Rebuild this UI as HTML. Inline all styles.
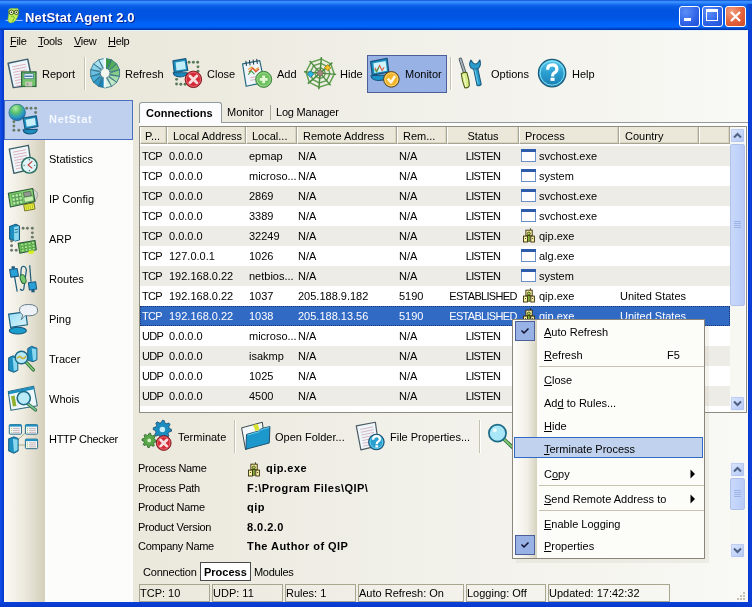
<!DOCTYPE html><html><head><meta charset="utf-8"><style>
*{margin:0;padding:0;box-sizing:border-box}
html,body{width:752px;height:607px;overflow:hidden;background:#ece9d8}
body{position:relative;font-family:"Liberation Sans",sans-serif;font-size:11px;color:#000}
.a{position:absolute}
.t{position:absolute;white-space:nowrap;line-height:13px}
.cap{letter-spacing:-0.7px}
svg{position:absolute;overflow:visible}
body{will-change:transform}
</style></head><body>
<div class="a" style="left:4px;top:30px;width:744px;height:573px;background:linear-gradient(to right,#e8e6d8 0%,#eceade 25%,#f0efe8 50%,#f9f9f5 100%)"></div>
<div class="a" style="left:0;top:0;width:752px;height:30px;
background:linear-gradient(to bottom,#0a3fc0 0px,#2f86ff 1px,#3d95ff 2px,#1f73f5 4px,#0a5fe6 6px,#0054e0 10px,#0055e3 18px,#0060f4 22px,#0066fb 27px,#0050d8 28px,#0038b0 29.5px,#0038b0 30px)"></div>
<div class="t" style="left:25px;top:10px;font-size:13px;font-weight:bold;letter-spacing:0.15px;color:#fff;text-shadow:1px 1px 0 #0a1e8a;line-height:16px">NetStat Agent 2.0</div>
<div class="a" style="left:679px;top:6px;width:21px;height:21px;border:1px solid #fff;border-radius:3px;background:radial-gradient(circle at 30% 25%,#5d8ff8 0%,#2f62e6 60%,#1e4fd6 100%)"></div>
<div class="a" style="left:702px;top:6px;width:21px;height:21px;border:1px solid #fff;border-radius:3px;background:radial-gradient(circle at 30% 25%,#5d8ff8 0%,#2f62e6 60%,#1e4fd6 100%)"></div>
<div class="a" style="left:725px;top:6px;width:21px;height:21px;border:1px solid #fff;border-radius:3px;background:radial-gradient(circle at 30% 25%,#f0a080 0%,#e2623c 55%,#c94a28 100%)"></div>
<div class="a" style="left:684px;top:18px;width:7px;height:3px;background:#fff"></div>
<div class="a" style="left:747px;top:4px;width:5px;height:26px;background:linear-gradient(to right,#0550e0,#0842cc)"></div>
<div class="a" style="left:706px;top:9px;width:12px;height:12px;border:1px solid #fff;border-top:3px solid #fff"></div>
<svg style="left:725px;top:6px" width="21" height="21" viewBox="0 0 21 21"><path d="M6,6 L15,15 M15,6 L6,15" stroke="#fff" stroke-width="2.2"/></svg>
<div class="a" style="left:0px;top:30px;width:4px;height:577px;background:linear-gradient(to right,#1250e8,#0a42dc 2px,#0836c8 4px)"></div>
<div class="a" style="left:748px;top:30px;width:4px;height:577px;background:linear-gradient(to right,#0836c8,#0a42dc 2px,#0a3ad0 4px)"></div>
<div class="a" style="left:0px;top:602px;width:752px;height:5px;background:linear-gradient(to bottom,#0a40d8 0,#0a3ed4 2px,#0836c8 5px)"></div>
<div class="a" style="left:4px;top:30px;width:744px;height:1px;background:#e4f0fc"></div>
<div class="t" style="left:10px;top:35px;letter-spacing:-0.3px"><u>F</u>ile</div>
<div class="t" style="left:38px;top:35px;letter-spacing:-0.3px"><u>T</u>ools</div>
<div class="t" style="left:74px;top:35px;letter-spacing:-0.3px"><u>V</u>iew</div>
<div class="t" style="left:108px;top:35px;letter-spacing:-0.3px"><u>H</u>elp</div>
<div class="a" style="left:367px;top:55px;width:80px;height:38px;background:#98b2e6;border:1px solid #4b5f99"></div>
<div class="t" style="left:42px;top:68px;">Report</div>
<div class="t" style="left:125px;top:68px;">Refresh</div>
<div class="t" style="left:207px;top:68px;">Close</div>
<div class="t" style="left:277px;top:68px;">Add</div>
<div class="t" style="left:340px;top:68px;">Hide</div>
<div class="t" style="left:405px;top:68px;">Monitor</div>
<div class="t" style="left:491px;top:68px;">Options</div>
<div class="t" style="left:572px;top:68px;">Help</div>
<div class="a" style="left:84px;top:57px;width:2px;height:33px;border-left:1px solid #c5c2b2;border-right:1px solid #fff"></div>
<div class="a" style="left:450px;top:57px;width:2px;height:33px;border-left:1px solid #c5c2b2;border-right:1px solid #fff"></div>
<svg style="left:4px;top:54px" width="40" height="40" viewBox="0 0 607 607">
<polygon points="62,140 360,78 440,470 140,510" fill="#eef6fb" stroke="#3d5c6e" stroke-width="22" stroke-linejoin="round"/>
<line x1="125" y1="195" x2="330" y2="155" stroke="#d8a0a8" stroke-width="12"/><line x1="133" y1="237" x2="338" y2="197" stroke="#d8a0a8" stroke-width="12"/><line x1="141" y1="279" x2="346" y2="239" stroke="#d8a0a8" stroke-width="12"/><line x1="149" y1="321" x2="354" y2="281" stroke="#d8a0a8" stroke-width="12"/><line x1="157" y1="363" x2="362" y2="323" stroke="#d8a0a8" stroke-width="12"/><line x1="165" y1="405" x2="370" y2="365" stroke="#d8a0a8" stroke-width="12"/><line x1="173" y1="447" x2="378" y2="407" stroke="#d8a0a8" stroke-width="12"/><line x1="181" y1="489" x2="386" y2="449" stroke="#d8a0a8" stroke-width="12"/>
<rect x="268" y="272" width="217" height="220" fill="#74c46c" stroke="#2e6a3e" stroke-width="20"/>
<rect x="305" y="300" width="140" height="75" fill="#e8f4fb" stroke="#3a6a8a" stroke-width="10"/>
<line x1="315" y1="338" x2="435" y2="338" stroke="#4a7aaa" stroke-width="22"/>
<rect x="322" y="420" width="106" height="72" fill="#c8ccb8"/>
<rect x="345" y="438" width="25" height="40" fill="#9aa090"/>
</svg>
<svg style="left:86px;top:54px" width="40" height="40" viewBox="0 0 607 607"><path d="M273,222 L192,88 L291,65 L290,220 Z" fill="#c8eef8" stroke="#2a6a80" stroke-width="12" stroke-linejoin="round"/><path d="M245,236 L114,150 L193,87 L260,227 Z" fill="#a8e0f2" stroke="#2a6a80" stroke-width="12" stroke-linejoin="round"/><path d="M226,261 L71,240 L114,149 L235,246 Z" fill="#88d2ec" stroke="#2a6a80" stroke-width="12" stroke-linejoin="round"/><path d="M220,291 L71,341 L71,239 L222,274 Z" fill="#68c0e4" stroke="#2a6a80" stroke-width="12" stroke-linejoin="round"/><path d="M227,321 L114,431 L71,340 L222,305 Z" fill="#4ab0da" stroke="#2a6a80" stroke-width="12" stroke-linejoin="round"/><path d="M247,345 L193,493 L114,430 L235,334 Z" fill="#3098c8" stroke="#2a6a80" stroke-width="12" stroke-linejoin="round"/><path d="M276,359 L291,515 L192,492 L259,353 Z" fill="#1a84b8" stroke="#2a6a80" stroke-width="12" stroke-linejoin="round"/><path d="M304,221 L289,65 L388,88 L321,227 Z" fill="#3a9a44" stroke="#2a6a80" stroke-width="12" stroke-linejoin="round"/><path d="M333,235 L387,87 L466,150 L345,246 Z" fill="#52ac58" stroke="#2a6a80" stroke-width="12" stroke-linejoin="round"/><path d="M353,259 L466,149 L509,240 L358,275 Z" fill="#6cbc70" stroke="#2a6a80" stroke-width="12" stroke-linejoin="round"/><path d="M360,289 L509,239 L509,341 L358,306 Z" fill="#88cc8a" stroke="#2a6a80" stroke-width="12" stroke-linejoin="round"/><path d="M354,319 L509,340 L466,431 L345,334 Z" fill="#a8dcaa" stroke="#2a6a80" stroke-width="12" stroke-linejoin="round"/><path d="M335,344 L466,430 L387,493 L320,353 Z" fill="#c4e8c6" stroke="#2a6a80" stroke-width="12" stroke-linejoin="round"/><path d="M307,358 L388,492 L289,515 L290,360 Z" fill="#dcf2de" stroke="#2a6a80" stroke-width="12" stroke-linejoin="round"/><rect x="268" y="55" width="36" height="175" fill="#eef8fb"/><rect x="268" y="350" width="36" height="160" fill="#eef8fb"/><circle cx="290" cy="290" r="62" fill="#f4f6f0"/></svg>
<svg style="left:168px;top:54px" width="40" height="40" viewBox="0 0 607 607"><circle cx="320" cy="125" r="22" fill="#5a7a5a"/><circle cx="385" cy="125" r="22" fill="#5a7a5a"/><circle cx="450" cy="125" r="22" fill="#5a7a5a"/><circle cx="455" cy="195" r="22" fill="#5a7a5a"/><circle cx="455" cy="260" r="22" fill="#5a7a5a"/><circle cx="130" cy="385" r="22" fill="#5a7a5a"/><circle cx="130" cy="455" r="22" fill="#5a7a5a"/><circle cx="195" cy="460" r="22" fill="#5a7a5a"/><circle cx="260" cy="460" r="22" fill="#5a7a5a"/><path d="M80,285 Q85,345 180,348 Q285,345 292,285 Z" fill="#1b8bc0" stroke="#16557a" stroke-width="16"/><polygon points="75,105 270,70 300,250 95,280" fill="#1d8fc0" stroke="#1a5c80" stroke-width="18" stroke-linejoin="round"/><polygon points="115,130 252,105 272,228 128,252" fill="#c0eefa"/><circle cx="385" cy="385" r="125" fill="#d42a36" stroke="#7a1418" stroke-width="14"/><circle cx="385" cy="385" r="107" fill="none" stroke="#f0a0a8" stroke-width="8"/><path d="M332.5,332.5 L437.5,437.5 M437.5,332.5 L332.5,437.5" stroke="#f8dede" stroke-width="42" stroke-linecap="round"/></svg>
<svg style="left:236px;top:54px" width="40" height="40" viewBox="0 0 607 607"><polygon points="100,150 360,100 430,430 155,490" fill="#eef6fb" stroke="#2a6a80" stroke-width="18" stroke-linejoin="round"/><line x1="150" y1="110" x2="158" y2="175" stroke="#1a3a50" stroke-width="16" stroke-linecap="round"/><line x1="205" y1="100" x2="213" y2="165" stroke="#1a3a50" stroke-width="16" stroke-linecap="round"/><line x1="260" y1="90" x2="268" y2="155" stroke="#1a3a50" stroke-width="16" stroke-linecap="round"/><line x1="315" y1="80" x2="323" y2="145" stroke="#1a3a50" stroke-width="16" stroke-linecap="round"/><polyline points="185,235 240,200 290,245 345,205" fill="none" stroke="#f0a840" stroke-width="20"/><polyline points="195,275 255,215 300,270 350,225" fill="none" stroke="#e04a28" stroke-width="18"/><polyline points="185,315 230,255 280,305" fill="none" stroke="#40a040" stroke-width="18"/><line x1="215" y1="360" x2="300" y2="345" stroke="#d8a0a8" stroke-width="12"/><line x1="220" y1="400" x2="300" y2="385" stroke="#d8a0a8" stroke-width="12"/><circle cx="420" cy="385" r="122" fill="#6cc060" stroke="#3a7a3a" stroke-width="14"/><circle cx="420" cy="385" r="100" fill="none" stroke="#c8f0b0" stroke-width="8"/><path d="M420,325 L420,445 M360,385 L480,385" stroke="#e4f8d4" stroke-width="44"/></svg>
<svg style="left:301px;top:54px" width="40" height="40" viewBox="0 0 607 607"><g transform="rotate(-18 290 290)"><polygon points="364,321 321,364 259,364 216,321 216,259 259,216 321,216 364,259" fill="none" stroke="#62a050" stroke-width="22"/><polygon points="429,347 347,429 233,429 151,347 151,233 233,151 347,151 429,233" fill="none" stroke="#62a050" stroke-width="22"/><polygon points="489,372 372,489 208,489 91,372 91,208 208,91 372,91 489,208" fill="none" stroke="#62a050" stroke-width="22"/><line x1="290" y1="290" x2="516" y2="384" stroke="#4a8a3e" stroke-width="22"/><line x1="290" y1="290" x2="384" y2="516" stroke="#4a8a3e" stroke-width="22"/><line x1="290" y1="290" x2="196" y2="516" stroke="#4a8a3e" stroke-width="22"/><line x1="290" y1="290" x2="64" y2="384" stroke="#4a8a3e" stroke-width="22"/><line x1="290" y1="290" x2="64" y2="196" stroke="#4a8a3e" stroke-width="22"/><line x1="290" y1="290" x2="196" y2="64" stroke="#4a8a3e" stroke-width="22"/><line x1="290" y1="290" x2="384" y2="64" stroke="#4a8a3e" stroke-width="22"/><line x1="290" y1="290" x2="516" y2="196" stroke="#4a8a3e" stroke-width="22"/></g><polygon points="290,235 345,290 290,345 235,290" fill="#a08878" stroke="#5a5040" stroke-width="10"/><polygon points="145,255 195,305 145,355 95,305" fill="#28b8e0" stroke="#1a5a80" stroke-width="10"/><polygon points="405,160 455,210 405,255 355,210" fill="#f0c020" stroke="#806010" stroke-width="10"/></svg>
<svg style="left:366px;top:54px" width="40" height="40" viewBox="0 0 607 607"><path d="M75,330 Q85,400 190,402 Q320,398 330,320 Z" fill="#1a94c8" stroke="#16557a" stroke-width="16"/><polygon points="70,115 320,65 345,275 95,320" fill="#1a8fc0" stroke="#174f78" stroke-width="18" stroke-linejoin="round"/><polygon points="112,140 298,105 318,255 128,290" fill="#d0f4fb"/><polyline points="135,210 165,260 205,175 245,250 275,200" fill="none" stroke="#e05040" stroke-width="16"/><polyline points="130,235 160,270 195,200" fill="none" stroke="#40a040" stroke-width="16"/><circle cx="385" cy="385" r="118" fill="#f2b428" stroke="#403420" stroke-width="14"/><circle cx="385" cy="385" r="98" fill="none" stroke="#fbe8a0" stroke-width="10"/><polyline points="330,375 380,430 440,335" fill="none" stroke="#fff8e0" stroke-width="40" stroke-linejoin="round"/></svg>
<svg style="left:453px;top:54px" width="40" height="40" viewBox="0 0 607 607"><line x1="112" y1="80" x2="180" y2="290" stroke="#4a5660" stroke-width="52" stroke-linecap="round"/><line x1="112" y1="80" x2="180" y2="290" stroke="#a8b4bc" stroke-width="26" stroke-linecap="round"/><path d="M125,300 Q160,270 210,282 Q248,400 248,480 Q225,522 178,512 Q140,420 125,300 Z" fill="#d8ec88" stroke="#4a5a18" stroke-width="16" stroke-linejoin="round"/><path d="M160,320 Q190,420 195,490" fill="none" stroke="#f4fcc8" stroke-width="18"/><path d="M308,205 L372,198 L428,462 Q405,492 365,478 Z" fill="#2a9ccb" stroke="#1a5a80" stroke-width="16" stroke-linejoin="round"/><path d="M272,92 Q232,160 272,210 Q325,252 388,215 Q432,168 408,90 L372,140 Q340,168 308,140 Z" fill="#2a9ccb" stroke="#1a5a80" stroke-width="16" stroke-linejoin="round"/><path d="M330,230 L380,450" fill="none" stroke="#70d0f0" stroke-width="14"/></svg>
<svg style="left:533px;top:54px" width="40" height="40" viewBox="0 0 607 607"><defs><linearGradient id="gHP" x1="0" y1="0" x2="0" y2="1"><stop offset="0" stop-color="#5ccaf0"/><stop offset="0.5" stop-color="#2a9ed0"/><stop offset="1" stop-color="#1a7cb0"/></linearGradient></defs><circle cx="290" cy="290" r="208" fill="url(#gHP)" stroke="#1a5a78" stroke-width="18"/><circle cx="290" cy="290" r="184" fill="none" stroke="#90e8fa" stroke-width="14"/><path d="M222,238 Q222,165 295,165 Q362,165 362,228 Q362,268 325,285 Q298,298 298,330 L298,340" fill="none" stroke="#fff" stroke-width="48"/><rect x="266" y="360" width="62" height="48" fill="#fff"/></svg>
<svg style="left:2px;top:4px" width="24" height="24" viewBox="0 0 607 607"><line x1="90" y1="415" x2="520" y2="415" stroke="#a8d0ff" stroke-width="26"/><path d="M165,150 Q190,100 270,110 Q330,118 385,105 Q430,120 420,230 Q410,335 340,420 Q295,490 200,478 Q140,455 150,380 Q160,300 170,255 Z" fill="#c0ec58" stroke="#78b028" stroke-width="12"/><circle cx="238" cy="210" r="58" fill="#f4ffd0" stroke="#203008" stroke-width="20"/><circle cx="238" cy="210" r="20" fill="#102000"/><circle cx="362" cy="210" r="54" fill="#f4ffd0" stroke="#203008" stroke-width="20"/><circle cx="362" cy="210" r="20" fill="#102000"/><path d="M230,320 Q300,280 310,360 L260,450" fill="none" stroke="#70b020" stroke-width="22"/></svg>
<div class="a" style="left:4px;top:100px;width:129px;height:502px;background:#fcfcfa"></div>
<div class="a" style="left:4px;top:100px;width:41px;height:502px;background:linear-gradient(to right,#faf9f4,#ece9dd 50%,#d4cfba)"></div>
<div class="a" style="left:4px;top:100px;width:129px;height:40px;background:#bfd0ef;border:1px solid #4a6fc1"></div>
<div class="t" style="left:49px;top:113px;font-weight:bold;color:#f4f8ff;letter-spacing:0.7px">NetStat</div>
<div class="t" style="left:49px;top:153px;">Statistics</div>
<div class="t" style="left:49px;top:193px;">IP Config</div>
<div class="t" style="left:49px;top:233px;">ARP</div>
<div class="t" style="left:49px;top:273px;">Routes</div>
<div class="t" style="left:49px;top:313px;">Ping</div>
<div class="t" style="left:49px;top:353px;">Tracer</div>
<div class="t" style="left:49px;top:393px;">Whois</div>
<div class="t" style="left:49px;top:433px;letter-spacing:-0.3px">HTTP Checker</div>
<svg style="left:4px;top:100px" width="40" height="40" viewBox="0 0 607 607"><defs><radialGradient id="gNS" cx="40%" cy="25%" r="75%"><stop offset="0" stop-color="#b0f0a0"/><stop offset="0.4" stop-color="#58c070"/><stop offset="0.75" stop-color="#2a98c8"/><stop offset="1" stop-color="#1a6aa8"/></radialGradient></defs><circle cx="200" cy="190" r="125" fill="url(#gNS)" stroke="#1a5a80" stroke-width="10"/><circle cx="345" cy="125" r="22" fill="#6a7a6a"/><circle cx="410" cy="125" r="22" fill="#6a7a6a"/><circle cx="480" cy="125" r="22" fill="#6a7a6a"/><circle cx="480" cy="190" r="22" fill="#6a7a6a"/><circle cx="150" cy="330" r="22" fill="#6a7a6a"/><circle cx="150" cy="395" r="22" fill="#6a7a6a"/><circle cx="150" cy="460" r="22" fill="#6a7a6a"/><circle cx="225" cy="460" r="22" fill="#6a7a6a"/><path d="M290,450 Q295,515 400,515 Q505,510 505,445 Z" fill="#1b8bc0" stroke="#16557a" stroke-width="16"/><polygon points="290,275 490,240 515,400 318,440" fill="#1d8fc0" stroke="#1a5c80" stroke-width="18" stroke-linejoin="round"/><polygon points="328,300 468,275 485,380 345,405" fill="#c8f0fa"/></svg>
<svg style="left:4px;top:140px" width="40" height="40" viewBox="0 0 607 607"><polygon points="80,140 370,80 420,440 150,505" fill="#eef6fb" stroke="#3d6068" stroke-width="20" stroke-linejoin="round"/><line x1="135" y1="185" x2="330" y2="148" stroke="#d8a0a8" stroke-width="12"/><line x1="143" y1="227" x2="338" y2="190" stroke="#d8a0a8" stroke-width="12"/><line x1="151" y1="269" x2="346" y2="232" stroke="#d8a0a8" stroke-width="12"/><line x1="159" y1="311" x2="354" y2="274" stroke="#d8a0a8" stroke-width="12"/><line x1="167" y1="353" x2="362" y2="316" stroke="#d8a0a8" stroke-width="12"/><line x1="175" y1="395" x2="370" y2="358" stroke="#d8a0a8" stroke-width="12"/><line x1="183" y1="437" x2="378" y2="400" stroke="#d8a0a8" stroke-width="12"/><circle cx="385" cy="385" r="118" fill="#e0f6f8" stroke="#2a7060" stroke-width="22"/><polyline points="430,320 365,380 430,430" fill="none" stroke="#c83838" stroke-width="16"/><circle cx="385" cy="300" r="10" fill="#2a5a60"/><circle cx="465" cy="385" r="10" fill="#2a5a60"/><circle cx="385" cy="465" r="10" fill="#2a5a60"/><circle cx="305" cy="385" r="10" fill="#2a5a60"/></svg>
<svg style="left:4px;top:180px" width="40" height="40" viewBox="0 0 607 607"><defs><linearGradient id="gIP" x1="0" y1="0" x2="1" y2="1"><stop offset="0" stop-color="#60b850"/><stop offset="0.5" stop-color="#90dc78"/><stop offset="1" stop-color="#58b048"/></linearGradient></defs><polygon points="430,130 505,190 505,255 470,320" fill="#d8dcd8" stroke="#6a7070" stroke-width="8"/><polygon points="65,200 435,128 470,325 98,410" fill="url(#gIP)" stroke="#2a5a3a" stroke-width="16" stroke-linejoin="round"/><polygon points="115,225 160,216 167,262 122,271" fill="#b8f0a0" stroke="#2a6a3a" stroke-width="7"/><polygon points="123,280 168,271 175,317 130,326" fill="#b8f0a0" stroke="#2a6a3a" stroke-width="7"/><polygon points="131,335 176,326 183,372 138,381" fill="#b8f0a0" stroke="#2a6a3a" stroke-width="7"/><polygon points="167,215 212,206 219,252 174,261" fill="#b8f0a0" stroke="#2a6a3a" stroke-width="7"/><polygon points="175,270 220,261 227,307 182,316" fill="#b8f0a0" stroke="#2a6a3a" stroke-width="7"/><polygon points="183,325 228,316 235,362 190,371" fill="#b8f0a0" stroke="#2a6a3a" stroke-width="7"/><polygon points="219,205 264,196 271,242 226,251" fill="#b8f0a0" stroke="#2a6a3a" stroke-width="7"/><polygon points="227,260 272,251 279,297 234,306" fill="#b8f0a0" stroke="#2a6a3a" stroke-width="7"/><polygon points="235,315 280,306 287,352 242,361" fill="#b8f0a0" stroke="#2a6a3a" stroke-width="7"/><rect x="300" y="180" width="110" height="70" fill="#909890" stroke="#404840" stroke-width="8" transform="rotate(-11 355 215)"/><polygon points="300,265 440,240 452,315 312,340" fill="#c8f0b0" stroke="#2a6a3a" stroke-width="7"/><polygon points="298,375 455,345 470,440 315,470" fill="#e8f040" stroke="#5a5a10" stroke-width="12"/><line x1="330" y1="385" x2="340" y2="450" stroke="#8a9010" stroke-width="8"/><line x1="362" y1="379" x2="372" y2="444" stroke="#8a9010" stroke-width="8"/><line x1="394" y1="373" x2="404" y2="438" stroke="#8a9010" stroke-width="8"/><line x1="426" y1="367" x2="436" y2="432" stroke="#8a9010" stroke-width="8"/></svg>
<svg style="left:4px;top:220px" width="40" height="40" viewBox="0 0 607 607"><path d="M85,100 L180,65 L235,95 L235,300 L175,320 L85,290 Z" fill="#1d8fc0" stroke="#1a5c80" stroke-width="16" stroke-linejoin="round"/><polygon points="150,110 225,90 225,300 155,318" fill="#8ad8f0"/><line x1="160" y1="150" x2="215" y2="140" stroke="#1a5c80" stroke-width="12"/><line x1="160" y1="190" x2="215" y2="180" stroke="#1a5c80" stroke-width="12"/><circle cx="290" cy="125" r="22" fill="#6a7a6a"/><circle cx="355" cy="125" r="22" fill="#6a7a6a"/><circle cx="430" cy="125" r="22" fill="#6a7a6a"/><circle cx="430" cy="195" r="22" fill="#6a7a6a"/><circle cx="430" cy="260" r="22" fill="#6a7a6a"/><circle cx="115" cy="320" r="22" fill="#6a7a6a"/><circle cx="115" cy="390" r="22" fill="#6a7a6a"/><circle cx="115" cy="460" r="22" fill="#6a7a6a"/><circle cx="185" cy="460" r="22" fill="#6a7a6a"/><polygon points="215,355 470,310 490,450 240,505" fill="#68c050" stroke="#2a5a3a" stroke-width="16" stroke-linejoin="round"/><rect x="255" y="360" width="38" height="32" fill="#a8e890" stroke="#3a7a3a" stroke-width="5"/><rect x="261" y="405" width="38" height="32" fill="#a8e890" stroke="#3a7a3a" stroke-width="5"/><rect x="267" y="450" width="38" height="32" fill="#a8e890" stroke="#3a7a3a" stroke-width="5"/><rect x="310" y="350" width="38" height="32" fill="#a8e890" stroke="#3a7a3a" stroke-width="5"/><rect x="316" y="395" width="38" height="32" fill="#a8e890" stroke="#3a7a3a" stroke-width="5"/><rect x="322" y="440" width="38" height="32" fill="#a8e890" stroke="#3a7a3a" stroke-width="5"/><rect x="365" y="340" width="38" height="32" fill="#a8e890" stroke="#3a7a3a" stroke-width="5"/><rect x="371" y="385" width="38" height="32" fill="#a8e890" stroke="#3a7a3a" stroke-width="5"/><rect x="377" y="430" width="38" height="32" fill="#a8e890" stroke="#3a7a3a" stroke-width="5"/><rect x="420" y="330" width="38" height="32" fill="#a8e890" stroke="#3a7a3a" stroke-width="5"/><rect x="426" y="375" width="38" height="32" fill="#a8e890" stroke="#3a7a3a" stroke-width="5"/><rect x="432" y="420" width="38" height="32" fill="#a8e890" stroke="#3a7a3a" stroke-width="5"/><polygon points="370,470 450,455 455,505 375,520" fill="#d0f020"/></svg>
<svg style="left:4px;top:260px" width="40" height="40" viewBox="0 0 607 607"><path d="M200,480 L140,140" stroke="#1a5a7a" stroke-width="18" fill="none"/><path d="M390,80 L410,330" stroke="#1a5a7a" stroke-width="18" fill="none"/><path d="M245,440 Q280,480 300,440 L340,150 Q330,100 300,95 Q265,95 260,140 L250,300" stroke="#1a5a7a" stroke-width="18" fill="none"/><polygon points="85,145 200,130 220,245 105,260" fill="#2aa0d8" stroke="#1a5a80" stroke-width="16" stroke-linejoin="round"/><rect x="115" y="95" width="50" height="40" fill="#1a5a7a"/><ellipse cx="290" cy="290" rx="40" ry="70" fill="#78c870" stroke="#2a6a3a" stroke-width="14" transform="rotate(-20 290 290)"/><polygon points="370,345 480,330 495,440 385,455" fill="#2aa0d8" stroke="#1a5a80" stroke-width="16" stroke-linejoin="round"/><rect x="415" y="455" width="50" height="35" fill="#1a5a7a"/></svg>
<svg style="left:4px;top:300px" width="40" height="40" viewBox="0 0 607 607"><defs><linearGradient id="gPG" x1="0" y1="0" x2="1" y2="1"><stop offset="0" stop-color="#90dcf4"/><stop offset="1" stop-color="#e0f6fc"/></linearGradient></defs><ellipse cx="210" cy="465" rx="130" ry="52" fill="#1a9ccd" stroke="#16557a" stroke-width="16"/><polygon points="70,215 330,180 355,375 100,415" fill="url(#gPG)" stroke="#1a6080" stroke-width="18" stroke-linejoin="round"/><path d="M370,68 Q510,68 510,155 Q510,240 380,240 Q340,240 320,235 L262,300 L285,225 Q235,200 235,155 Q235,68 370,68 Z" fill="#eef2f6" stroke="#5a7480" stroke-width="14" stroke-linejoin="round"/></svg>
<svg style="left:4px;top:340px" width="40" height="40" viewBox="0 0 607 607"><polygon points="360,130 420,95 500,125 500,300 440,330 360,305" fill="#1d8fc0" stroke="#1a5c80" stroke-width="14" stroke-linejoin="round"/><polygon points="420,125 490,140 490,295 440,315" fill="#8ad8f0"/><polygon points="70,270 135,240 210,265 210,460 150,490 70,460" fill="#1d8fc0" stroke="#1a5c80" stroke-width="14" stroke-linejoin="round"/><polygon points="130,270 200,285 200,450 150,470" fill="#8ad8f0"/><line x1="335" y1="335" x2="445" y2="455" stroke="#2a6a3a" stroke-width="50" stroke-linecap="round"/><line x1="335" y1="335" x2="445" y2="455" stroke="#80c870" stroke-width="26" stroke-linecap="round"/><circle cx="265" cy="265" r="95" fill="#b8eaf8" stroke="#1a6a88" stroke-width="22"/><path d="M195,280 Q240,230 265,270 Q300,300 335,245" fill="none" stroke="#c8b040" stroke-width="26"/></svg>
<svg style="left:4px;top:380px" width="40" height="40" viewBox="0 0 607 607"><polygon points="65,175 450,95 505,390 105,460" fill="#eef8fc" stroke="#2a6a80" stroke-width="16" stroke-linejoin="round"/><polygon points="70,175 450,100 458,140 78,215" fill="#1d8fc0"/><rect x="120" y="240" width="55" height="160" fill="#90b030" transform="rotate(-10 150 320)"/><line x1="360" y1="360" x2="480" y2="455" stroke="#2a6a3a" stroke-width="48" stroke-linecap="round"/><line x1="360" y1="360" x2="480" y2="455" stroke="#80c8a0" stroke-width="24" stroke-linecap="round"/><circle cx="300" cy="275" r="100" fill="#b8eaf8" stroke="#1a6a88" stroke-width="24"/></svg>
<svg style="left:4px;top:420px" width="40" height="40" viewBox="0 0 607 607"><line x1="180" y1="330" x2="330" y2="190" stroke="#90a070" stroke-width="12"/><line x1="200" y1="380" x2="330" y2="380" stroke="#90a070" stroke-width="12"/><rect x="80" y="70" width="185" height="145" rx="14" fill="#f4fafc" stroke="#1a6080" stroke-width="14"/><rect x="80" y="70" width="185" height="30" fill="#1d8fc0"/><rect x="105" y="120" width="14" height="14" fill="#90c040"/><line x1="135" y1="127" x2="240" y2="127" stroke="#a07070" stroke-width="8"/><rect x="105" y="150" width="14" height="14" fill="#90c040"/><line x1="135" y1="157" x2="240" y2="157" stroke="#a07070" stroke-width="8"/><rect x="105" y="180" width="14" height="14" fill="#90c040"/><line x1="135" y1="187" x2="240" y2="187" stroke="#a07070" stroke-width="8"/><rect x="325" y="70" width="185" height="145" rx="14" fill="#f4fafc" stroke="#1a6080" stroke-width="14"/><rect x="325" y="70" width="185" height="30" fill="#1d8fc0"/><rect x="350" y="120" width="14" height="14" fill="#90c040"/><line x1="380" y1="127" x2="485" y2="127" stroke="#a07070" stroke-width="8"/><rect x="350" y="150" width="14" height="14" fill="#90c040"/><line x1="380" y1="157" x2="485" y2="157" stroke="#a07070" stroke-width="8"/><rect x="350" y="180" width="14" height="14" fill="#90c040"/><line x1="380" y1="187" x2="485" y2="187" stroke="#a07070" stroke-width="8"/><rect x="325" y="290" width="185" height="145" rx="14" fill="#f4fafc" stroke="#1a6080" stroke-width="14"/><rect x="325" y="290" width="185" height="30" fill="#1d8fc0"/><rect x="350" y="340" width="14" height="14" fill="#90c040"/><line x1="380" y1="347" x2="485" y2="347" stroke="#a07070" stroke-width="8"/><rect x="350" y="370" width="14" height="14" fill="#90c040"/><line x1="380" y1="377" x2="485" y2="377" stroke="#a07070" stroke-width="8"/><rect x="350" y="400" width="14" height="14" fill="#90c040"/><line x1="380" y1="407" x2="485" y2="407" stroke="#a07070" stroke-width="8"/><path d="M70,285 L150,255 L215,280 L215,470 L150,505 L70,470 Z" fill="#1d8fc0" stroke="#1a5c80" stroke-width="14" stroke-linejoin="round"/><polygon points="135,285 205,300 205,455 150,480" fill="#8ad8f0"/></svg>
<div class="a" style="left:139px;top:122px;width:609px;height:1px;background:#919b9c"></div>
<div class="a" style="left:139px;top:102px;width:83px;height:25px;background:#fcfcfe;border:1px solid #919b9c;border-bottom:none;border-radius:3px 3px 0 0"></div>
<div class="t" style="left:146px;top:107px;font-weight:bold">Connections</div>
<div class="t" style="left:227px;top:106px;">Monitor</div>
<div class="a" style="left:270px;top:105px;width:1px;height:15px;background:#aca899"></div>
<div class="t" style="left:276px;top:106px;letter-spacing:-0.2px">Log Manager</div>
<div class="a" style="left:139px;top:123px;width:608px;height:3px;background:#fcfcfc"></div>
<div class="a" style="left:139px;top:126px;width:608px;height:287px;background:#fff;border:1px solid #8f8d80"></div>
<div class="a" style="left:140px;top:127px;width:27px;height:17px;background:#ebe8d9;border-left:1px solid #fff;border-right:1px solid #a8a593;border-bottom:1px solid #a8a593;box-shadow:inset -1px -1px 0 #d8d4c2"></div>
<div class="t" style="left:145px;top:130px;">P...</div>
<div class="a" style="left:167px;top:127px;width:79px;height:17px;background:#ebe8d9;border-left:1px solid #fff;border-right:1px solid #a8a593;border-bottom:1px solid #a8a593;box-shadow:inset -1px -1px 0 #d8d4c2"></div>
<div class="t" style="left:173px;top:130px;">Local Address</div>
<div class="a" style="left:246px;top:127px;width:51px;height:17px;background:#ebe8d9;border-left:1px solid #fff;border-right:1px solid #a8a593;border-bottom:1px solid #a8a593;box-shadow:inset -1px -1px 0 #d8d4c2"></div>
<div class="t" style="left:252px;top:130px;">Local...</div>
<div class="a" style="left:297px;top:127px;width:100px;height:17px;background:#ebe8d9;border-left:1px solid #fff;border-right:1px solid #a8a593;border-bottom:1px solid #a8a593;box-shadow:inset -1px -1px 0 #d8d4c2"></div>
<div class="t" style="left:303px;top:130px;">Remote Address</div>
<div class="a" style="left:397px;top:127px;width:50px;height:17px;background:#ebe8d9;border-left:1px solid #fff;border-right:1px solid #a8a593;border-bottom:1px solid #a8a593;box-shadow:inset -1px -1px 0 #d8d4c2"></div>
<div class="t" style="left:403px;top:130px;">Rem...</div>
<div class="a" style="left:447px;top:127px;width:72px;height:17px;background:#ebe8d9;border-left:1px solid #fff;border-right:1px solid #a8a593;border-bottom:1px solid #a8a593;box-shadow:inset -1px -1px 0 #d8d4c2"></div>
<div class="t" style="left:447px;width:72px;top:130px;text-align:center">Status</div>
<div class="a" style="left:519px;top:127px;width:100px;height:17px;background:#ebe8d9;border-left:1px solid #fff;border-right:1px solid #a8a593;border-bottom:1px solid #a8a593;box-shadow:inset -1px -1px 0 #d8d4c2"></div>
<div class="t" style="left:525px;top:130px;">Process</div>
<div class="a" style="left:619px;top:127px;width:80px;height:17px;background:#ebe8d9;border-left:1px solid #fff;border-right:1px solid #a8a593;border-bottom:1px solid #a8a593;box-shadow:inset -1px -1px 0 #d8d4c2"></div>
<div class="t" style="left:625px;top:130px;">Country</div>
<div class="a" style="left:699px;top:127px;width:31px;height:17px;background:#ebe8d9;border-left:1px solid #fff;border-right:1px solid #a8a593;border-bottom:1px solid #a8a593;box-shadow:inset -1px -1px 0 #d8d4c2"></div>
<div class="a" style="left:140px;top:146px;width:590px;height:20px;background:#eeece7"></div>
<div class="t cap" style="left:142px;top:150px;">TCP</div>
<div class="t" style="left:169px;top:150px;">0.0.0.0</div>
<div class="t" style="left:249px;top:150px;">epmap</div>
<div class="t" style="left:298px;top:150px;">N/A</div>
<div class="t" style="left:399px;top:150px;">N/A</div>
<div class="t cap" style="left:447px;width:72px;top:150px;text-align:center;">LISTEN</div>
<svg style="left:521px;top:149px" width="15" height="13" viewBox="0 0 15 13"><rect x="0.5" y="0.5" width="14" height="12" fill="#fff" stroke="#6b8fc9"/><rect x="0" y="0" width="15" height="3" fill="#2c5cab"/></svg>
<div class="t" style="left:539px;top:150px;">svchost.exe</div>
<div class="t cap" style="left:142px;top:170px;">TCP</div>
<div class="t" style="left:169px;top:170px;">0.0.0.0</div>
<div class="t" style="left:249px;top:170px;">microso...</div>
<div class="t" style="left:298px;top:170px;">N/A</div>
<div class="t" style="left:399px;top:170px;">N/A</div>
<div class="t cap" style="left:447px;width:72px;top:170px;text-align:center;">LISTEN</div>
<svg style="left:521px;top:169px" width="15" height="13" viewBox="0 0 15 13"><rect x="0.5" y="0.5" width="14" height="12" fill="#fff" stroke="#6b8fc9"/><rect x="0" y="0" width="15" height="3" fill="#2c5cab"/></svg>
<div class="t" style="left:539px;top:170px;">system</div>
<div class="a" style="left:140px;top:186px;width:590px;height:20px;background:#eeece7"></div>
<div class="t cap" style="left:142px;top:190px;">TCP</div>
<div class="t" style="left:169px;top:190px;">0.0.0.0</div>
<div class="t" style="left:249px;top:190px;">2869</div>
<div class="t" style="left:298px;top:190px;">N/A</div>
<div class="t" style="left:399px;top:190px;">N/A</div>
<div class="t cap" style="left:447px;width:72px;top:190px;text-align:center;">LISTEN</div>
<svg style="left:521px;top:189px" width="15" height="13" viewBox="0 0 15 13"><rect x="0.5" y="0.5" width="14" height="12" fill="#fff" stroke="#6b8fc9"/><rect x="0" y="0" width="15" height="3" fill="#2c5cab"/></svg>
<div class="t" style="left:539px;top:190px;">svchost.exe</div>
<div class="t cap" style="left:142px;top:210px;">TCP</div>
<div class="t" style="left:169px;top:210px;">0.0.0.0</div>
<div class="t" style="left:249px;top:210px;">3389</div>
<div class="t" style="left:298px;top:210px;">N/A</div>
<div class="t" style="left:399px;top:210px;">N/A</div>
<div class="t cap" style="left:447px;width:72px;top:210px;text-align:center;">LISTEN</div>
<svg style="left:521px;top:209px" width="15" height="13" viewBox="0 0 15 13"><rect x="0.5" y="0.5" width="14" height="12" fill="#fff" stroke="#6b8fc9"/><rect x="0" y="0" width="15" height="3" fill="#2c5cab"/></svg>
<div class="t" style="left:539px;top:210px;">svchost.exe</div>
<div class="a" style="left:140px;top:226px;width:590px;height:20px;background:#eeece7"></div>
<div class="t cap" style="left:142px;top:230px;">TCP</div>
<div class="t" style="left:169px;top:230px;">0.0.0.0</div>
<div class="t" style="left:249px;top:230px;">32249</div>
<div class="t" style="left:298px;top:230px;">N/A</div>
<div class="t" style="left:399px;top:230px;">N/A</div>
<div class="t cap" style="left:447px;width:72px;top:230px;text-align:center;">LISTEN</div>
<svg style="left:516px;top:226px" width="24" height="24" viewBox="0 0 607 607"><line x1="365" y1="55" x2="365" y2="110" stroke="#302800" stroke-width="20"/><rect x="250" y="105" width="160" height="145" fill="#f8f0a8" stroke="#302800" stroke-width="22"/><circle cx="325" cy="190" r="38" fill="#a8d850" stroke="#302800" stroke-width="18"/><rect x="190" y="255" width="100" height="150" fill="#f8f0a8" stroke="#302800" stroke-width="22"/><rect x="375" y="255" width="90" height="150" fill="#f8f0a8" stroke="#302800" stroke-width="22"/><rect x="300" y="240" width="52" height="145" fill="#98d040" stroke="#302800" stroke-width="16"/><circle cx="240" cy="315" r="14" fill="#302800"/><circle cx="420" cy="315" r="14" fill="#302800"/></svg>
<div class="t" style="left:539px;top:230px;">qip.exe</div>
<div class="t cap" style="left:142px;top:250px;">TCP</div>
<div class="t" style="left:169px;top:250px;">127.0.0.1</div>
<div class="t" style="left:249px;top:250px;">1026</div>
<div class="t" style="left:298px;top:250px;">N/A</div>
<div class="t" style="left:399px;top:250px;">N/A</div>
<div class="t cap" style="left:447px;width:72px;top:250px;text-align:center;">LISTEN</div>
<svg style="left:521px;top:249px" width="15" height="13" viewBox="0 0 15 13"><rect x="0.5" y="0.5" width="14" height="12" fill="#fff" stroke="#6b8fc9"/><rect x="0" y="0" width="15" height="3" fill="#2c5cab"/></svg>
<div class="t" style="left:539px;top:250px;">alg.exe</div>
<div class="a" style="left:140px;top:266px;width:590px;height:20px;background:#eeece7"></div>
<div class="t cap" style="left:142px;top:270px;">TCP</div>
<div class="t" style="left:169px;top:270px;">192.168.0.22</div>
<div class="t" style="left:249px;top:270px;">netbios...</div>
<div class="t" style="left:298px;top:270px;">N/A</div>
<div class="t" style="left:399px;top:270px;">N/A</div>
<div class="t cap" style="left:447px;width:72px;top:270px;text-align:center;">LISTEN</div>
<svg style="left:521px;top:269px" width="15" height="13" viewBox="0 0 15 13"><rect x="0.5" y="0.5" width="14" height="12" fill="#fff" stroke="#6b8fc9"/><rect x="0" y="0" width="15" height="3" fill="#2c5cab"/></svg>
<div class="t" style="left:539px;top:270px;">system</div>
<div class="t cap" style="left:142px;top:290px;">TCP</div>
<div class="t" style="left:169px;top:290px;">192.168.0.22</div>
<div class="t" style="left:249px;top:290px;">1037</div>
<div class="t" style="left:298px;top:290px;">205.188.9.182</div>
<div class="t" style="left:399px;top:290px;">5190</div>
<div class="t cap" style="left:447px;width:72px;top:290px;text-align:center;">ESTABLISHED</div>
<svg style="left:516px;top:286px" width="24" height="24" viewBox="0 0 607 607"><line x1="365" y1="55" x2="365" y2="110" stroke="#302800" stroke-width="20"/><rect x="250" y="105" width="160" height="145" fill="#f8f0a8" stroke="#302800" stroke-width="22"/><circle cx="325" cy="190" r="38" fill="#a8d850" stroke="#302800" stroke-width="18"/><rect x="190" y="255" width="100" height="150" fill="#f8f0a8" stroke="#302800" stroke-width="22"/><rect x="375" y="255" width="90" height="150" fill="#f8f0a8" stroke="#302800" stroke-width="22"/><rect x="300" y="240" width="52" height="145" fill="#98d040" stroke="#302800" stroke-width="16"/><circle cx="240" cy="315" r="14" fill="#302800"/><circle cx="420" cy="315" r="14" fill="#302800"/></svg>
<div class="t" style="left:539px;top:290px;">qip.exe</div>
<div class="t" style="left:620px;top:290px;">United States</div>
<div class="a" style="left:140px;top:306px;width:590px;height:20px;background:#316ac5"></div>
<div class="a" style="left:140px;top:306px;width:590px;height:20px;border:1px dotted #0a1a40;opacity:0.6"></div>
<div class="t cap" style="left:142px;top:310px;color:#fff;">TCP</div>
<div class="t" style="left:169px;top:310px;color:#fff;">192.168.0.22</div>
<div class="t" style="left:249px;top:310px;color:#fff;">1038</div>
<div class="t" style="left:298px;top:310px;color:#fff;">205.188.13.56</div>
<div class="t" style="left:399px;top:310px;color:#fff;">5190</div>
<div class="t cap" style="left:447px;width:72px;top:310px;text-align:center;color:#fff;">ESTABLISHED</div>
<svg style="left:516px;top:306px" width="24" height="24" viewBox="0 0 607 607"><line x1="365" y1="55" x2="365" y2="110" stroke="#302800" stroke-width="20"/><rect x="250" y="105" width="160" height="145" fill="#f8f0a8" stroke="#302800" stroke-width="22"/><circle cx="325" cy="190" r="38" fill="#a8d850" stroke="#302800" stroke-width="18"/><rect x="190" y="255" width="100" height="150" fill="#f8f0a8" stroke="#302800" stroke-width="22"/><rect x="375" y="255" width="90" height="150" fill="#f8f0a8" stroke="#302800" stroke-width="22"/><rect x="300" y="240" width="52" height="145" fill="#98d040" stroke="#302800" stroke-width="16"/><circle cx="240" cy="315" r="14" fill="#302800"/><circle cx="420" cy="315" r="14" fill="#302800"/></svg>
<div class="t" style="left:539px;top:310px;color:#fff;">qip.exe</div>
<div class="t" style="left:620px;top:310px;color:#fff;">United States</div>
<div class="t cap" style="left:142px;top:330px;">UDP</div>
<div class="t" style="left:169px;top:330px;">0.0.0.0</div>
<div class="t" style="left:249px;top:330px;">microso...</div>
<div class="t" style="left:298px;top:330px;">N/A</div>
<div class="t" style="left:399px;top:330px;">N/A</div>
<div class="t cap" style="left:447px;width:72px;top:330px;text-align:center;">LISTEN</div>
<div class="a" style="left:140px;top:346px;width:590px;height:20px;background:#eeece7"></div>
<div class="t cap" style="left:142px;top:350px;">UDP</div>
<div class="t" style="left:169px;top:350px;">0.0.0.0</div>
<div class="t" style="left:249px;top:350px;">isakmp</div>
<div class="t" style="left:298px;top:350px;">N/A</div>
<div class="t" style="left:399px;top:350px;">N/A</div>
<div class="t cap" style="left:447px;width:72px;top:350px;text-align:center;">LISTEN</div>
<div class="t cap" style="left:142px;top:370px;">UDP</div>
<div class="t" style="left:169px;top:370px;">0.0.0.0</div>
<div class="t" style="left:249px;top:370px;">1025</div>
<div class="t" style="left:298px;top:370px;">N/A</div>
<div class="t" style="left:399px;top:370px;">N/A</div>
<div class="t cap" style="left:447px;width:72px;top:370px;text-align:center;">LISTEN</div>
<div class="a" style="left:140px;top:386px;width:590px;height:20px;background:#eeece7"></div>
<div class="t cap" style="left:142px;top:390px;">UDP</div>
<div class="t" style="left:169px;top:390px;">0.0.0.0</div>
<div class="t" style="left:249px;top:390px;">4500</div>
<div class="t" style="left:298px;top:390px;">N/A</div>
<div class="t" style="left:399px;top:390px;">N/A</div>
<div class="t cap" style="left:447px;width:72px;top:390px;text-align:center;">LISTEN</div>
<div class="a" style="left:730px;top:127px;width:15px;height:285px;background:#f8f8f3"></div>
<div class="a" style="left:730px;top:128px;width:15px;height:15px;background:linear-gradient(135deg,#dce6fc,#c4d4f8 60%,#b6c8f4);border:1px solid #f4f6fc;border-radius:2px;box-shadow:inset 0 0 0 0.5px #a8bce8"></div>
<svg style="left:730px;top:128px" width="15" height="15" viewBox="0 0 15 15"><path d="M4,9.5 L7.5,6 L11,9.5" fill="none" stroke="#4d6185" stroke-width="2"/></svg>
<div class="a" style="left:730px;top:144px;width:15px;height:162px;background:linear-gradient(to right,#c8d8fb,#c2d3fa 50%,#b8cbf6);border:1px solid #b0c2ea;border-radius:2px"></div>
<div class="a" style="left:730px;top:396px;width:15px;height:15px;background:linear-gradient(135deg,#dce6fc,#c4d4f8 60%,#b6c8f4);border:1px solid #f4f6fc;border-radius:2px;box-shadow:inset 0 0 0 0.5px #a8bce8"></div>
<svg style="left:730px;top:396px" width="15" height="15" viewBox="0 0 15 15"><path d="M4,5.5 L7.5,9 L11,5.5" fill="none" stroke="#4d6185" stroke-width="2"/></svg>
<div class="a" style="left:734px;top:221px;width:7px;height:1px;background:#9eb4e6"></div>
<div class="a" style="left:734px;top:223px;width:7px;height:1px;background:#9eb4e6"></div>
<div class="a" style="left:734px;top:225px;width:7px;height:1px;background:#9eb4e6"></div>
<div class="a" style="left:734px;top:227px;width:7px;height:1px;background:#9eb4e6"></div>
<div class="t" style="left:178px;top:431px;">Terminate</div>
<div class="t" style="left:275px;top:431px;">Open Folder...</div>
<div class="t" style="left:390px;top:431px;">File Properties...</div>
<div class="a" style="left:234px;top:420px;width:2px;height:33px;border-left:1px solid #c5c2b2;border-right:1px solid #fff"></div>
<div class="a" style="left:479px;top:420px;width:2px;height:33px;border-left:1px solid #c5c2b2;border-right:1px solid #fff"></div>
<svg style="left:138px;top:416px" width="40" height="40" viewBox="0 0 607 607"><polygon points="510,205 507,232 467,245 457,263 469,304 448,321 410,302 390,308 370,345 343,342 330,302 312,292 271,304 254,283 273,245 267,225 230,205 233,178 273,165 283,147 271,106 292,89 330,108 350,102 370,65 397,68 410,108 428,118 469,106 486,127 467,165 473,185" fill="#1a8cc0" stroke="#1a4a70" stroke-width="12" stroke-linejoin="round"/><circle cx="370" cy="205" r="42" fill="#c8ecf8"/><polygon points="280,370 278,391 244,401 237,414 248,448 231,461 201,444 186,448 170,480 149,478 139,444 126,437 92,448 79,431 96,401 92,386 60,370 62,349 96,339 103,326 92,292 109,279 139,296 154,292 170,260 191,262 201,296 214,303 248,292 261,309 244,339 248,354" fill="#58a848" stroke="#2a5a2a" stroke-width="12" stroke-linejoin="round"/><circle cx="170" cy="370" r="28" fill="#d8f0c8"/><circle cx="390" cy="410" r="112" fill="#d42a36" stroke="#7a1418" stroke-width="14"/><circle cx="390" cy="410" r="94" fill="none" stroke="#f0a0a8" stroke-width="8"/><path d="M342.96,362.96 L437.04,457.04 M437.04,362.96 L342.96,457.04" stroke="#f8dede" stroke-width="42" stroke-linecap="round"/></svg>
<svg style="left:236px;top:416px" width="40" height="40" viewBox="0 0 607 607"><polygon points="85,180 400,95 430,340 145,510" fill="#f4f8fa" stroke="#2a3a40" stroke-width="14" stroke-linejoin="round"/><polygon points="260,135 330,120 355,205 295,230" fill="#d8e030"/><path d="M160,280 Q250,250 340,230 Q360,200 410,185 L515,160 L505,410 L150,505 Z" fill="#1d98cc" stroke="#1a4a68" stroke-width="14" stroke-linejoin="round"/><path d="M175,290 Q260,260 345,240 Q365,212 410,198 L505,175" fill="none" stroke="#80e0f8" stroke-width="12"/></svg>
<svg style="left:351px;top:416px" width="40" height="40" viewBox="0 0 607 607"><polygon points="80,150 370,95 420,450 150,515" fill="#eef6fb" stroke="#4a5a60" stroke-width="18" stroke-linejoin="round"/><line x1="140" y1="205" x2="335" y2="165" stroke="#d0a8b0" stroke-width="12"/><line x1="148" y1="247" x2="343" y2="207" stroke="#d0a8b0" stroke-width="12"/><line x1="156" y1="289" x2="351" y2="249" stroke="#d0a8b0" stroke-width="12"/><line x1="164" y1="331" x2="359" y2="291" stroke="#d0a8b0" stroke-width="12"/><line x1="172" y1="373" x2="367" y2="333" stroke="#d0a8b0" stroke-width="12"/><line x1="180" y1="415" x2="375" y2="375" stroke="#d0a8b0" stroke-width="12"/><line x1="188" y1="457" x2="383" y2="417" stroke="#d0a8b0" stroke-width="12"/><circle cx="385" cy="395" r="118" fill="#2aa0d0" stroke="#1a5070" stroke-width="16"/><circle cx="385" cy="395" r="96" fill="none" stroke="#8ae4f8" stroke-width="10"/><path d="M335,360 Q335,305 388,305 Q438,305 438,350 Q438,380 410,392 Q392,400 392,420 L392,428" fill="none" stroke="#fff" stroke-width="34"/><rect x="370" y="445" width="42" height="32" fill="#fff"/></svg>
<svg style="left:482px;top:416px" width="40" height="40" viewBox="0 0 607 607"><line x1="330" y1="350" x2="470" y2="480" stroke="#2a6a3a" stroke-width="54" stroke-linecap="round"/><line x1="330" y1="350" x2="470" y2="480" stroke="#80c870" stroke-width="30" stroke-linecap="round"/><circle cx="235" cy="260" r="130" fill="#a8e6f8" stroke="#1a6a88" stroke-width="26"/><circle cx="195" cy="215" r="30" fill="#e8fafc"/></svg>
<div class="t" style="left:138px;top:462px;letter-spacing:-0.3px">Process Name</div>
<div class="t" style="left:266px;top:462px;font-weight:bold;letter-spacing:0.45px">qip.exe</div>
<div class="t" style="left:138px;top:482px;letter-spacing:-0.3px">Process Path</div>
<div class="t" style="left:247px;top:482px;font-weight:bold;letter-spacing:0.45px">F:\Program Files\QIP\</div>
<div class="t" style="left:138px;top:501px;letter-spacing:-0.3px">Product Name</div>
<div class="t" style="left:247px;top:501px;font-weight:bold;letter-spacing:0.45px">qip</div>
<div class="t" style="left:138px;top:521px;letter-spacing:-0.3px">Product Version</div>
<div class="t" style="left:247px;top:521px;font-weight:bold;letter-spacing:0.45px">8.0.2.0</div>
<div class="t" style="left:138px;top:540px;letter-spacing:-0.3px">Company Name</div>
<div class="t" style="left:247px;top:540px;font-weight:bold;letter-spacing:0.45px">The Author of QIP</div>
<svg style="left:241px;top:460px" width="24" height="24" viewBox="0 0 607 607"><line x1="365" y1="55" x2="365" y2="110" stroke="#302800" stroke-width="20"/><rect x="250" y="105" width="160" height="145" fill="#f8f0a8" stroke="#302800" stroke-width="22"/><circle cx="325" cy="190" r="38" fill="#a8d850" stroke="#302800" stroke-width="18"/><rect x="190" y="255" width="100" height="150" fill="#f8f0a8" stroke="#302800" stroke-width="22"/><rect x="375" y="255" width="90" height="150" fill="#f8f0a8" stroke="#302800" stroke-width="22"/><rect x="300" y="240" width="52" height="145" fill="#98d040" stroke="#302800" stroke-width="16"/><circle cx="240" cy="315" r="14" fill="#302800"/><circle cx="420" cy="315" r="14" fill="#302800"/></svg>
<div class="a" style="left:730px;top:461px;width:15px;height:98px;background:#f8f8f3"></div>
<div class="a" style="left:730px;top:462px;width:15px;height:15px;background:linear-gradient(135deg,#dce6fc,#c4d4f8 60%,#b6c8f4);border:1px solid #f4f6fc;border-radius:2px;box-shadow:inset 0 0 0 0.5px #a8bce8"></div>
<svg style="left:730px;top:462px" width="15" height="15" viewBox="0 0 15 15"><path d="M4,9.5 L7.5,6 L11,9.5" fill="none" stroke="#4d6185" stroke-width="2"/></svg>
<div class="a" style="left:730px;top:478px;width:15px;height:32px;background:linear-gradient(to right,#c8d8fb,#c2d3fa 50%,#b8cbf6);border:1px solid #b0c2ea;border-radius:2px"></div>
<div class="a" style="left:730px;top:543px;width:15px;height:15px;background:linear-gradient(135deg,#dce6fc,#c4d4f8 60%,#b6c8f4);border:1px solid #f4f6fc;border-radius:2px;box-shadow:inset 0 0 0 0.5px #a8bce8"></div>
<svg style="left:730px;top:543px" width="15" height="15" viewBox="0 0 15 15"><path d="M4,5.5 L7.5,9 L11,5.5" fill="none" stroke="#4d6185" stroke-width="2"/></svg>
<div class="a" style="left:734px;top:490px;width:7px;height:1px;background:#9eb4e6"></div>
<div class="a" style="left:734px;top:492px;width:7px;height:1px;background:#9eb4e6"></div>
<div class="a" style="left:734px;top:494px;width:7px;height:1px;background:#9eb4e6"></div>
<div class="a" style="left:734px;top:496px;width:7px;height:1px;background:#9eb4e6"></div>
<div class="t" style="left:143px;top:566px;letter-spacing:-0.2px">Connection</div>
<div class="a" style="left:200px;top:562px;width:51px;height:19px;background:#fff;border:1px solid #4a4a4a"></div>
<div class="t" style="left:204px;top:566px;font-weight:bold">Process</div>
<div class="t" style="left:254px;top:566px;letter-spacing:-0.3px">Modules</div>
<div class="a" style="left:139px;top:584px;width:71px;height:18px;border:1px solid #a9a68f"></div>
<div class="t" style="left:140px;top:587px;">TCP: 10</div>
<div class="a" style="left:212px;top:584px;width:71px;height:18px;border:1px solid #a9a68f"></div>
<div class="t" style="left:213px;top:587px;">UDP: 11</div>
<div class="a" style="left:285px;top:584px;width:71px;height:18px;border:1px solid #a9a68f"></div>
<div class="t" style="left:286px;top:587px;">Rules: 1</div>
<div class="a" style="left:358px;top:584px;width:106px;height:18px;border:1px solid #a9a68f"></div>
<div class="t" style="left:359px;top:587px;">Auto Refresh: On</div>
<div class="a" style="left:466px;top:584px;width:80px;height:18px;border:1px solid #a9a68f"></div>
<div class="t" style="left:467px;top:587px;">Logging: Off</div>
<div class="a" style="left:548px;top:584px;width:122px;height:18px;border:1px solid #a9a68f"></div>
<div class="t" style="left:549px;top:587px;">Updated: 17:42:32</div>
<div class="a" style="left:743px;top:592px;width:2px;height:2px;background:#c5c2b2"></div>
<div class="a" style="left:740px;top:595px;width:2px;height:2px;background:#c5c2b2"></div>
<div class="a" style="left:743px;top:595px;width:2px;height:2px;background:#c5c2b2"></div>
<div class="a" style="left:737px;top:598px;width:2px;height:2px;background:#c5c2b2"></div>
<div class="a" style="left:740px;top:598px;width:2px;height:2px;background:#c5c2b2"></div>
<div class="a" style="left:743px;top:598px;width:2px;height:2px;background:#c5c2b2"></div>
<div class="a" style="left:516px;top:323px;width:193px;height:240px;background:rgba(120,110,80,0.08)"></div>
<div class="a" style="left:512px;top:319px;width:193px;height:240px;background:#fcfcf9;border:1px solid #8a867a"></div>
<div class="a" style="left:513px;top:320px;width:24px;height:238px;background:linear-gradient(to right,#fdfdfb,#f1efe6 60%,#d6d2bf)"></div>
<div class="a" style="left:514px;top:437px;width:189px;height:21px;background:#c1d2ee;border:1px solid #316ac5"></div>
<div class="t" style="left:544px;top:326px;"><u>A</u>uto Refresh</div>
<div class="a" style="left:515px;top:321px;width:20px;height:20px;background:#98b2e6;border:1px solid #4b5f99"></div>
<svg style="left:515px;top:321px" width="20" height="20" viewBox="0 0 20 20"><path d="M6.5,9.5 L9,12 L13.5,7.5" fill="none" stroke="#101030" stroke-width="1.5"/></svg>
<div class="t" style="left:544px;top:349px;"><u>R</u>efresh</div>
<div class="t" style="left:667px;top:349px;">F5</div>
<div class="a" style="left:539px;top:366px;width:165px;height:1px;background:#c5c2b2"></div>
<div class="t" style="left:544px;top:374px;"><u>C</u>lose</div>
<div class="t" style="left:544px;top:397px;">Ad<u>d</u> to Rules...</div>
<div class="t" style="left:544px;top:420px;"><u>H</u>ide</div>
<div class="t" style="left:544px;top:443px;"><u>T</u>erminate Process</div>
<div class="t" style="left:544px;top:468px;">C<u>o</u>py</div>
<svg style="left:690px;top:469px" width="6" height="10" viewBox="0 0 6 10"><path d="M0.5,0.5 L5,5 L0.5,9.5 Z" fill="#000"/></svg>
<div class="a" style="left:539px;top:485px;width:165px;height:1px;background:#c5c2b2"></div>
<div class="t" style="left:544px;top:493px;"><u>S</u>end Remote Address to</div>
<svg style="left:690px;top:494px" width="6" height="10" viewBox="0 0 6 10"><path d="M0.5,0.5 L5,5 L0.5,9.5 Z" fill="#000"/></svg>
<div class="a" style="left:539px;top:510px;width:165px;height:1px;background:#c5c2b2"></div>
<div class="t" style="left:544px;top:518px;"><u>E</u>nable Logging</div>
<div class="t" style="left:544px;top:540px;"><u>P</u>roperties</div>
<div class="a" style="left:515px;top:535px;width:20px;height:20px;background:#98b2e6;border:1px solid #4b5f99"></div>
<svg style="left:515px;top:535px" width="20" height="20" viewBox="0 0 20 20"><path d="M6.5,9.5 L9,12 L13.5,7.5" fill="none" stroke="#101030" stroke-width="1.5"/></svg>
</body></html>
